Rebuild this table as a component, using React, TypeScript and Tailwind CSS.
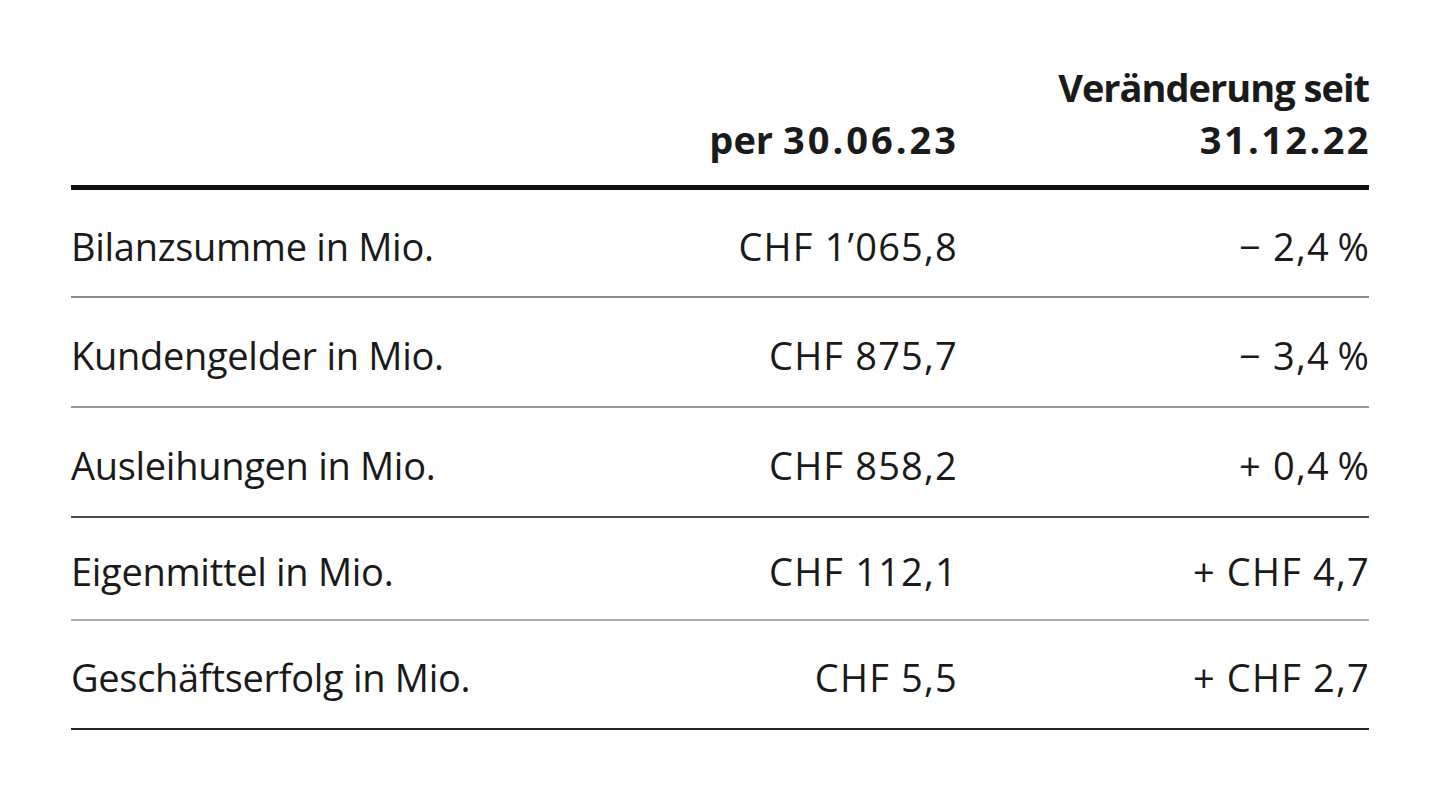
import React from 'react';

interface Row {
  label: string;
  value: string;
  change: string;
  height: string;
  line: string;
}

const rows: Row[] = [
  { label: 'Bilanzsumme in Mio.', value: 'CHF 1’065,8', change: '− 2,4\u2009%', height: 'h-[108px]', line: 'border-[#8c8c8c]' },
  { label: 'Kundengelder in Mio.', value: 'CHF 875,7', change: '− 3,4\u2009%', height: 'h-[110px]', line: 'border-[#999999]' },
  { label: 'Ausleihungen in Mio.', value: 'CHF 858,2', change: '+ 0,4\u2009%', height: 'h-[110px]', line: 'border-[#4a4a4a]' },
  { label: 'Eigenmittel in Mio.', value: 'CHF 112,1', change: '+ CHF 4,7', height: 'h-[103px]', line: 'border-[#ababab]' },
  { label: 'Geschäftserfolg in Mio.', value: 'CHF 5,5', change: '+ CHF 2,7', height: 'h-[109px]', line: 'border-[#262626]' },
];

export default function App() {
  return (
    <div className="w-[1440px] h-[810px] bg-white text-[#1a1a1a] font-['Open_Sans',sans-serif] pt-[61px] pl-[71px]">
      <div className="w-[1298px]">
        {/* header */}
        <div className="grid grid-cols-[1fr_320px_412px] border-b-[5px] border-[#111] pb-[20px] text-[38px] leading-[52px] font-bold">
          <div />
          <div className="self-end text-right mr-[-2px]">
            <span className="tracking-[0px]">per </span>
            <span className="tracking-[3px]">30.06.23</span>
          </div>
          <div className="text-right">
            <div className="tracking-[-1px]">Veränderung seit</div>
            <div className="tracking-[2.4px] mr-[-2px]">31.12.22</div>
          </div>
        </div>

        {rows.map((row) => (
          <div
            key={row.label}
            className={`grid grid-cols-[1fr_320px_412px] items-center border-b-2 ${row.line} ${row.height} text-[38px] pt-[6px]`}
          >
            <div className="tracking-[-0.3px]">{row.label}</div>
            <div className="text-right tracking-[1.2px] mr-[-1px]">{row.value}</div>
            <div className="text-right tracking-[1.2px] mr-[-1px]">{row.change}</div>
          </div>
        ))}
      </div>
    </div>
  );
}
